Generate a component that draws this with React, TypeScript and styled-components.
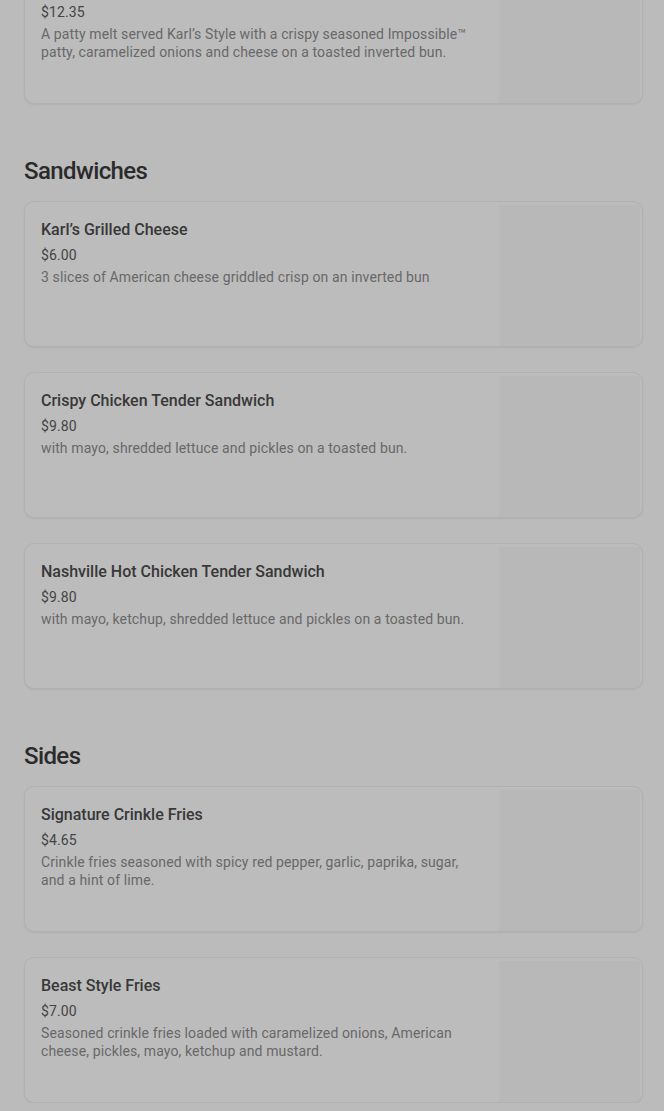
import styled, { createGlobalStyle } from "styled-components";

const GlobalStyle = createGlobalStyle`
  body {
    margin: 0;
    background: #bbbbbb;
    font-family: Roboto, "Liberation Sans", Arial, sans-serif;
    overflow: hidden;
  }
`;

type Item = { name: string; price: string; description: string };
type Section = { title?: string; items: Item[] };

const menu: Section[] = [
  {
    items: [
      {
        name: "Impossible™ Patty Melt",
        price: "$12.35",
        description:
          "A patty melt served Karl’s Style with a crispy seasoned Impossible™ patty, caramelized onions and cheese on a toasted inverted bun.",
      },
    ],
  },
  {
    title: "Sandwiches",
    items: [
      {
        name: "Karl’s Grilled Cheese",
        price: "$6.00",
        description: "3 slices of American cheese griddled crisp on an inverted bun",
      },
      {
        name: "Crispy Chicken Tender Sandwich",
        price: "$9.80",
        description: "with mayo, shredded lettuce and pickles on a toasted bun.",
      },
      {
        name: "Nashville Hot Chicken Tender Sandwich",
        price: "$9.80",
        description: "with mayo, ketchup, shredded lettuce and pickles on a toasted bun.",
      },
    ],
  },
  {
    title: "Sides",
    items: [
      {
        name: "Signature Crinkle Fries",
        price: "$4.65",
        description:
          "Crinkle fries seasoned with spicy red pepper, garlic, paprika, sugar, and a hint of lime.",
      },
      {
        name: "Beast Style Fries",
        price: "$7.00",
        description:
          "Seasoned crinkle fries loaded with caramelized onions, American cheese, pickles, mayo, ketchup and mustard.",
      },
    ],
  },
];

export default function App() {
  return (
    <>
      <GlobalStyle />
      <Page>
        {menu.map((section, i) => (
          <MenuSection key={i}>
            {section.title && <SectionTitle>{section.title}</SectionTitle>}
            <CardList>
              {section.items.map((item) => (
                <Card key={item.name}>
                  <CardText>
                    <ItemName>{item.name}</ItemName>
                    <Price>{item.price}</Price>
                    <Description>{item.description}</Description>
                  </CardText>
                  <Thumb />
                </Card>
              ))}
            </CardList>
          </MenuSection>
        ))}
      </Page>
    </>
  );
}

// page is scrolled: the first card sits partly above the viewport
const Page = styled.div`
  margin-top: -42px;
  padding: 0 21px 0 24px;
  display: flex;
  flex-direction: column;
  gap: 53px;
`;

const MenuSection = styled.section`
  display: flex;
  flex-direction: column;
`;

const SectionTitle = styled.h2`
  margin: 0 0 16px;
  font-size: 24px;
  line-height: 28px;
  font-weight: 500;
  letter-spacing: -0.6px;
  color: #2b2b2b;
`;

const CardList = styled.div`
  display: flex;
  flex-direction: column;
  gap: 25px;
`;

const Card = styled.div`
  display: flex;
  height: 146px;
  box-sizing: border-box;
  background: #bcbcbc;
  border: 1px solid #b1b1b1;
  border-radius: 10px;
  box-shadow: 0 1px 2px rgba(0, 0, 0, 0.06);
  overflow: hidden;
`;

const CardText = styled.div`
  flex: 1;
  padding: 16px 20px 0 16px;
  display: flex;
  flex-direction: column;
`;

const ItemName = styled.div`
  font-size: 16px;
  line-height: 24px;
  font-weight: 500;
  color: #383838;
  margin-bottom: 3px;
`;

const Price = styled.div`
  font-size: 14px;
  line-height: 20px;
  color: #444444;
  letter-spacing: 0.1px;
  margin-bottom: 3px;
`;

const Description = styled.div`
  font-size: 14px;
  line-height: 18px;
  letter-spacing: 0.12px;
  color: #686868;
`;

const Thumb = styled.div`
  width: 141px;
  flex-shrink: 0;
  margin: 3px 2px 0 0;
  background: #b8b8b8;
`;
